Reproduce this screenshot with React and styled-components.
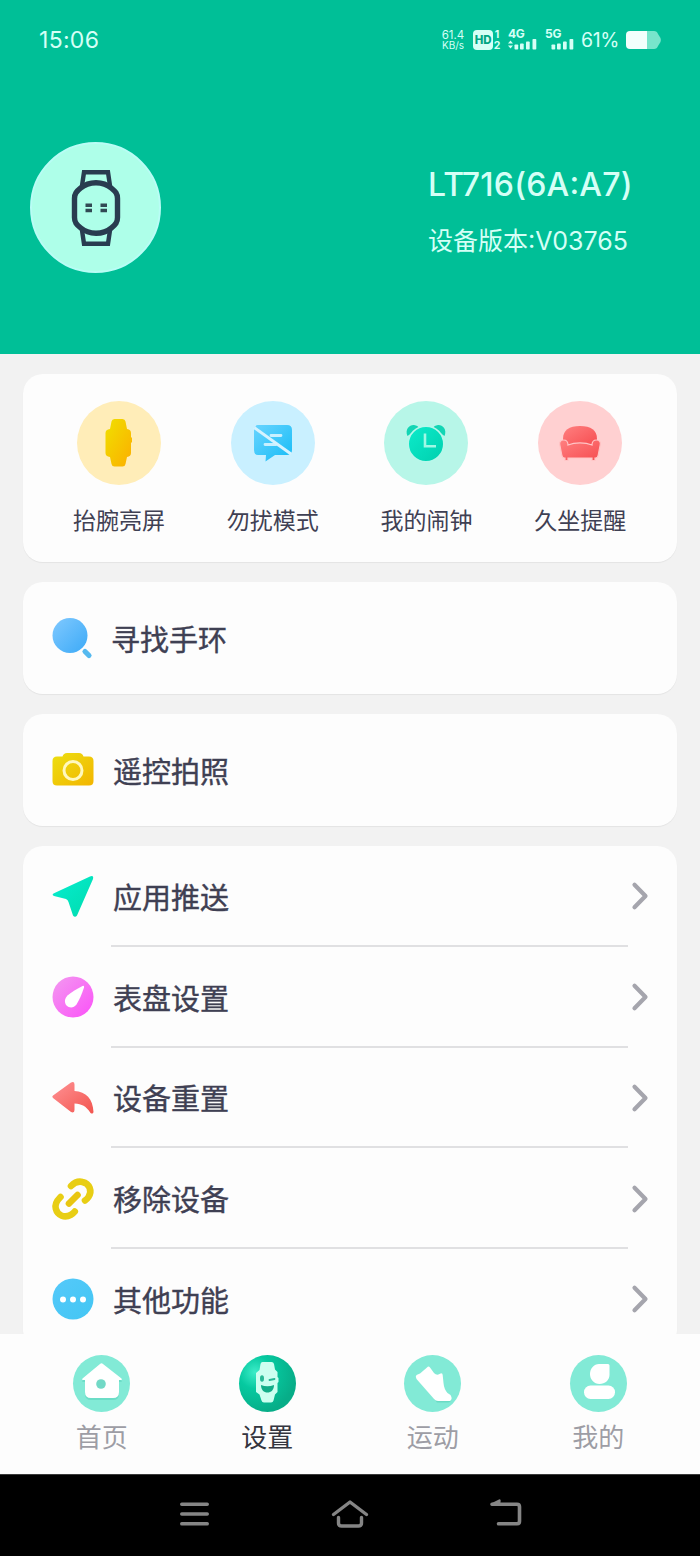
import React from 'react';
import styled, { createGlobalStyle } from 'styled-components';

const GlobalStyle = createGlobalStyle`
  * {
    box-sizing: border-box;
  }
  body {
    margin: 0;
    background: #f2f2f2;
    font-family: Inter, 'Noto Sans CJK SC', sans-serif;
    color: #3f4053;
  }
  svg {
    display: block;
    flex: none;
    overflow: visible;
  }
`;

// Layout
const Screen = styled.div`
  width: 700px;
  height: 1556px;
  display: flex;
  flex-direction: column;
  overflow: hidden;
  background: #f2f2f2;
`;

const Header = styled.header`
  flex: none;
  height: 354px;
  background: #00bf97;
  color: #d5fff6;
`;

const StatusBar = styled.div`
  height: 79px;
  padding: 0 39px 0 39px;
  display: flex;
  align-items: center;
  justify-content: space-between;
`;

const Clock = styled.span`
  font-size: 23px;
  line-height: 28px;
  letter-spacing: 0.3px;
`;

const StatusIcons = styled.div`
  display: flex;
  align-items: center;
  height: 28px;
`;

const Speed = styled.div`
  width: 24px;
  margin-right: 8px;
  font-size: 11.5px;
  line-height: 10px;
  text-align: center;
  white-space: nowrap;
  span {
    display: block;
  }
  span + span {
    font-size: 10px;
  }
`;

const HdBadge = styled.div`
  width: 20px;
  height: 20px;
  border-radius: 4px;
  background: #d5fff6;
  color: #00a583;
  font-size: 11.5px;
  font-weight: 800;
  line-height: 20px;
  text-align: center;
  letter-spacing: -0.3px;
`;

const SimNumbers = styled.div`
  width: 8px;
  margin-right: 7px;
  font-size: 10.5px;
  font-weight: 700;
  line-height: 11px;
  text-align: center;
`;

const Signal = styled.div`
  width: 30px;
  margin-right: ${ ({ gap }) => gap }px;
  font-size: 12px;
  font-weight: 700;
  line-height: 10px;
  letter-spacing: -0.3px;
`;

const Battery = styled.span`
  margin-right: 7px;
  font-size: 19.5px;
  letter-spacing: -0.4px;
`;

const Device = styled.div`
  display: flex;
  align-items: center;
  justify-content: space-between;
  height: 131px;
  margin-top: 63px;
  padding: 0 0 0 30px;
`;

const Avatar = styled.div`
  width: 131px;
  height: 131px;
  display: flex;
  align-items: center;
  justify-content: center;
  border: 2px solid #b9fdf5;
  border-radius: 50%;
  background: #aeffe9;
`;

const DeviceInfo = styled.div`
  width: 272px;
  padding-top: 7px;
  white-space: nowrap;
`;

const DeviceName = styled.h1`
  margin: 0 0 19px;
  font-size: 32px;
  font-weight: 500;
  line-height: 40px;
  letter-spacing: 0.2px;
`;

const DeviceVersion = styled.p`
  margin: 0;
  font-size: 25px;
  line-height: 34px;
`;

const Colon = styled.span`
  vertical-align: 2px;
  line-height: 1;
`;

const Content = styled.main`
  flex: 1;
  min-height: 0;
  padding: 20px 23px 0;
  display: flex;
  flex-direction: column;
  gap: 20px;
  overflow: hidden;
`;

const Card = styled.section`
  flex: none;
  border-radius: 20px;
  background: #fdfdfd;
  box-shadow: 0 1px 1px rgba(0, 0, 0, 0.06);
`;

const QuickGrid = styled(Card)`
  height: 188px;
  padding: 27px 20px 0 19px;
  display: grid;
  grid-template-columns: repeat(4, 1fr);
`;

const QuickItem = styled.div`
  display: flex;
  flex-direction: column;
  align-items: center;
  gap: 19px;
  font-size: 23px;
  line-height: 34px;
`;

const QuickCircle = styled.div`
  width: 84px;
  height: 84px;
  display: flex;
  align-items: center;
  justify-content: center;
  border-radius: 50%;
  background: ${ ({ tint }) => tint };
`;

const Row = styled.div`
  height: ${ ({ height }) => height || 100.75 }px;
  padding: 0 29px 0 29px;
  display: flex;
  align-items: center;
`;

const RowBody = styled.div`
  flex: 1;
  align-self: stretch;
  display: flex;
  align-items: center;
  margin-left: 17px;
  margin-right: 4px;
  padding-left: ${ ({ inset = 2 }) => inset }px;
  padding-top: 1px;
  border-bottom: 2px solid ${ ({ divided }) => (divided ? '#e0e0e2' : 'transparent') };
  font-size: 29px;
  -webkit-text-stroke: 0.4px currentColor;
`;

const TabBar = styled.nav`
  flex: none;
  height: 140px;
  padding: 21px 19px 0 19px;
  display: grid;
  grid-template-columns: repeat(4, 1fr);
  background: #fdfdfd;
`;

const Tab = styled.div`
  display: flex;
  flex-direction: column;
  align-items: center;
  gap: 8px;
  font-size: 26px;
  line-height: 36px;
  color: ${ ({ active }) => (active ? '#34353f' : '#9d9da5') };
`;

const SystemNav = styled.footer`
  flex: none;
  height: 82px;
  padding: 0 178px 3px 179px;
  display: flex;
  align-items: center;
  justify-content: space-between;
  border-top: 1px solid #3a3a3a;
  background: #000;
`;

// Gradient shared by the coloured icons
const Gradient = ({ id, from, to }) => (
  <defs>
    <linearGradient id={ id } x1='0' y1='0' x2='1' y2='1'>
      <stop offset='0' stopColor={ from } />
      <stop offset='1' stopColor={ to } />
    </linearGradient>
  </defs>
);

const SignalBars = ({ arrows }) => (
  <svg width='30' height='11' viewBox='0 0 30 11' fill='#d5fff6'>
    { arrows && <path d='M0 4.500 2.500 1.500 5 4.500zM0 6.500h5L2.500 9.500z' /> }
    <rect x='6.500' y='5.500' width='3.700' height='5' rx='.8' />
    <rect x='12' y='4.500' width='3.700' height='6' rx='.8' />
    <rect x='18' y='2.500' width='3.700' height='8' rx='.8' />
    <rect x='24.500' y='0' width='3.800' height='10.500' rx='.8' />
  </svg>
);

const BatteryIcon = () => (
  <svg width='35' height='18' viewBox='0 0 35 18'>
    <path d='M20 0h8q3 0 4 3l2.500 4q.8 2 0 4L32 15q-1 3-4 3h-8z' fill='#77e5cb' />
    <path d='M4 0h17v18H4q-4 0-4-4V4q0-4 4-4z' fill='#f2fffc' />
  </svg>
);

const DeviceIcon = () => (
  <svg width='48' height='76' viewBox='0 0 48 76' fill='none' stroke='#293c50'>
    <path d='M9.500 19 12 2.300h24L38.500 19M9.500 57 12 73.700h24L38.500 57' strokeWidth='4.400' />
    <path d='M24 12.800c6.500 0 11.500 2 15.500 5.400 4 3.300 6 5.300 6 10.300v19c0 5-2 7-6 10.300-4 3.400-9 5.400-15.500 5.400s-11.500-2-15.500-5.400c-4-3.300-6-5.300-6-10.300v-19c0-5 2-7 6-10.300 4-3.400 9-5.400 15.500-5.400z' fill='#aeffe9' strokeWidth='5.400' />
    <path d='M13.500 35.300h6.500M28.500 35.300h6.500M13.500 40.500h6.500M28.500 40.500h6.500' stroke='#314954' strokeWidth='3.400' />
  </svg>
);

const WristIcon = () => (
  <svg width='28' height='48' viewBox='0 0 28 48' fill='url(#wrist)'>
    <Gradient id='wrist' from='#f0e000' to='#fcae00' />
    <path d='M9.500 0h8q2.500 0 3 2.500L22 10q4 .5 4 4v4l1 1v4l-1 1v10q0 3.500-4 4l-1.500 7q-.5 2.500-3 2.500h-8Q7 47.500 6.500 45L5 38q-4.500-.5-4.500-4V14q0-3.500 4.500-4L6.500 2.500Q7 0 9.500 0z' />
  </svg>
);

const DndIcon = () => (
  <svg width='40' height='38' viewBox='0 0 40 38'>
    <Gradient id='dnd' from='#68d4ff' to='#16bcf6' />
    <path d='M5 1h29q5 0 5 5v20q0 5-5 5H22l-9.500 6.500L13 31H5q-4 0-4-5V6q0-5 4-5z' fill='url(#dnd)' />
    <path d='M18 11.500h10M12 20.500h11' stroke='#c8f0ff' strokeWidth='2.800' strokeLinecap='round' />
    <path d='M1 3.500 38 30' stroke='#d5f3ff' strokeWidth='3' />
    <path d='M0 0h4L1 5z' fill='#c9efff' />
  </svg>
);

const AlarmIcon = () => (
  <svg width='40' height='38' viewBox='0 0 40 38'>
    <Gradient id='alarm' from='#0ceccb' to='#00cfae' />
    <path d='M1.500 12C-1.500 5 4 .5 8 1q4 .5 5 3zM38.500 12C41.500 5 36 .5 32 1q-4 .5-5 3z' fill='#13d5b4' />
    <circle cx='20' cy='20' r='17.800' fill='url(#alarm)' stroke='#b8f7ea' strokeWidth='1.600' />
    <path d='M19 9.500v12.700h11' fill='none' stroke='#9ff8e5' strokeWidth='2.600' />
  </svg>
);

const SofaIcon = () => (
  <svg width='42' height='36' viewBox='0 0 42 36'>
    <Gradient id='sofa' from='#ff8080' to='#f64c50' />
    <path d='M4 14C4 5 10 1 21 1s17 4 17 13v7H4z' fill='url(#sofa)' />
    <path d='M.8 20c-.8-3 1-5 3.700-5 3 0 4.500 2 4.500 5 7-2.800 17-2.800 24 0 0-3 1.500-5 4.500-5 2.700 0 4.500 2 3.700 5L39 31q-.5 2-2.500 2h-.5v2.500h-3V33H9v2.500H6V33h-.5Q3.500 33 3 31z' fill='url(#sofa)' stroke='#ffc5c6' strokeWidth='1.200' />
  </svg>
);

const SearchIcon = () => (
  <svg width='42' height='42' viewBox='0 0 42 42'>
    <Gradient id='search' from='#80c9ff' to='#3caaf7' />
    <circle cx='18' cy='18.500' r='17.500' fill='url(#search)' />
    <path d='m33 34.500 4 4' stroke='#55b9ef' strokeWidth='5.200' strokeLinecap='round' />
  </svg>
);

const CameraIcon = () => (
  <svg width='42' height='42' viewBox='0 0 42 42'>
    <Gradient id='camera' from='#ecdf11' to='#f3b500' />
    <path d='M5 7.500h5.500Q11.500 4 15 4h12q3.500 0 4.500 3.500H37q4.500 0 4.500 4.500v20q0 4.500-4.500 4.500H5Q.5 36.500.5 32V12q0-4.500 4.500-4.500z' fill='url(#camera)' />
    <circle cx='21' cy='21.500' r='9' fill='none' stroke='#fff8bd' strokeWidth='3' />
  </svg>
);

const PushIcon = () => (
  <svg width='42' height='42' viewBox='0 0 42 42'>
    <Gradient id='push' from='#06edd0' to='#00dcae' />
    <path d='M2.500 18 38 1.500q4-1.500 3 2.500L25 40.500q-2 2.500-4 0L16.500 27Q16 25 14 24L2 21q-3-1.500.5-3z' fill='url(#push)' />
  </svg>
);

const DialIcon = () => (
  <svg width='42' height='42' viewBox='0 0 42 42'>
    <Gradient id='dial' from='#f39af0' to='#fb51f8' />
    <circle cx='21' cy='21' r='20.500' fill='url(#dial)' />
    <path d='M30.500 10q2-1 1.500 1.500C30 18 27 24.500 24.500 28.500c-3 4-7.500 3.500-10 1-2.500-3-2-7 1-10 4-3.500 9.500-6.500 15-9.500z' fill='#fff' />
  </svg>
);

const ResetIcon = () => (
  <svg width='42' height='42' viewBox='0 0 42 42'>
    <Gradient id='reset' from='#ff9294' to='#f2554f' />
    <path d='M1 18.500 19 5.500q3.500-1.500 3.500 2V14C34 14.500 41 22 41.500 35q-.5 2.500-3 1C34 29 30 27 22.500 26.500V33q0 3.500-3.500 2L1 21q-1.500-1.200 0-2.500z' fill='url(#reset)' />
  </svg>
);

const LinkIcon = () => (
  <svg width='42' height='42' viewBox='0 0 42 42' fill='none' stroke='#e8ce14' strokeWidth='6.600' strokeLinecap='round'>
    <path d='M19 8c4-4 7.500-5 11.500-4 7 1.500 10 9 6 15-1 1.500-2 2.500-3.500 3.500' />
    <path d='m17 25.500 8.500-8.500' stroke='#e9c611' />
    <path d='M8.500 19C4 23.500 2.500 26.500 3.800 30.800c1.800 7 9 9.500 15 6 1.700-1 3-2 4-3.300' />
  </svg>
);

const MoreIcon = () => (
  <svg width='42' height='42' viewBox='0 0 42 42'>
    <Gradient id='more' from='#55c9fa' to='#43c6f3' />
    <circle cx='21' cy='21' r='20.500' fill='url(#more)' />
    <path d='M11 21.500h.01M21 21.500h.01M31 21.500h.01' stroke='#fff' strokeWidth='6' strokeLinecap='round' />
  </svg>
);

const Chevron = () => (
  <svg width='16' height='28' viewBox='0 0 16 28' fill='none' stroke='#a5a5ad' strokeWidth='4.200' strokeLinecap='round' strokeLinejoin='round'>
    <path d='M2.500 2.700 13.500 14 2.500 25.300' />
  </svg>
);

const HomeTabIcon = () => (
  <svg width='57' height='57' viewBox='0 0 57 57'>
    <circle cx='28.500' cy='28.500' r='28.500' fill='#82ead6' />
    <path d='M27 10q1.500-1.500 3 0l18.500 14.500q1 1.500-1 1.500h-1.500v12q0 6-6 6H18q-6 0-6-6V26h-1.500q-2 0-1-1.500z' fill='#45c5ab' opacity='.35' transform='translate(0 1)' />
    <path d='M27 9q1.500-1.500 3 0l18.500 14.500q1 1.500-1 1.500h-1.500v12q0 6-6 6H18q-6 0-6-6V25h-1.500q-2 0-1-1.500z' fill='#fff' />
    <circle cx='28' cy='29' r='4.800' fill='#72d9c6' />
  </svg>
);

const SettingsTabIcon = () => (
  <svg width='57' height='57' viewBox='0 0 57 57'>
    <defs>
      <radialGradient id='settings' cx='.28' cy='.3' r='.72'>
        <stop offset='0' stopColor='#3cecc8' />
        <stop offset='.4' stopColor='#06c9a0' />
        <stop offset='1' stopColor='#07ad88' />
      </radialGradient>
    </defs>
    <circle cx='28.500' cy='28.500' r='28.500' fill='url(#settings)' />
    <path d='M23.500 7h9q2 0 2.500 2l1 5.500 2.500 2.500v5l1 1v4l-1 1v9L36 39.500l-1.500 6q-.5 2-2.500 2h-7q-2 0-2.500-2l-2-6L17 37V18l3.500-3 1-6q.5-2 2-2z' fill='#ccfff0' />
    <ellipse cx='23' cy='23.500' rx='2' ry='3.200' fill='#28b895' />
    <path d='m30.500 25 5-1' stroke='#28b895' strokeWidth='1.800' strokeLinecap='round' />
    <path d='M22 30q6.300 2.500 13 0c0 5-3 7.500-6.500 7.500S22 35 22 30z' fill='#12ad88' />
  </svg>
);

const SportTabIcon = () => (
  <svg width='57' height='57' viewBox='0 0 57 57'>
    <circle cx='28.500' cy='28.500' r='28.500' fill='#82ead6' />
    <path d='M12 22.500 24 12.500l8 8 6-2 1.500 16 8 10q-1 3-3.500 3H33z' fill='#45c5ab' opacity='.4' />
    <path d='M12.500 20 16 18.500l7-6q1.500-2 3 0l4 5.500q3 3 6.500.5 2-1 2.200 1.500l.8 8q.5 6 4 10l3 2q2.500 4-.5 6H34q-2.500 0-4-2L12.500 24q-1.500-2.500 0-4z' fill='#fff' />
  </svg>
);

const ProfileTabIcon = () => (
  <svg width='57' height='57' viewBox='0 0 57 57'>
    <circle cx='28.500' cy='28.500' r='28.500' fill='#82ead6' />
    <path d='M29 9h9q1.500 0 1.500 1.500V20c0 5-4.500 9-10 9s-9.500-4.500-9.500-10 4-10 9-10z' fill='#fff' />
    <rect x='14' y='30.500' width='31' height='13.500' rx='6.500' fill='#fff' />
  </svg>
);

const MenuKey = () => (
  <svg width='32' height='30' viewBox='0 0 32 30' stroke='#858585' strokeWidth='3.600' strokeLinecap='round'>
    <path d='M2.800 5.300h25.400M2.800 15h25.400M2.800 24.800h25.400' />
  </svg>
);

const HomeKey = () => (
  <svg width='40' height='30' viewBox='0 0 40 30' fill='none' stroke='#858585' strokeWidth='3.400' strokeLinecap='round' strokeLinejoin='round'>
    <path d='M2.500 15.500 19 3l16.500 12.500' />
    <path d='M7.500 18.500V24q0 3 3 3h17q3 0 3-3v-5.500' />
  </svg>
);

const BackKey = () => (
  <svg width='32' height='30' viewBox='0 0 32 30' fill='none' stroke='#858585' strokeWidth='3.600' strokeLinecap='round' strokeLinejoin='round'>
    <path d='M2 5.300h25q2.500 0 2.500 2.500v14.500q0 2.500-2.500 2.500H8.500' />
    <path d='M9.500 1.500 2 5.300h7z' fill='#858585' strokeWidth='2.400' />
  </svg>
);

const quickItems = [
  { label: '抬腕亮屏', tint: '#ffedb8', Icon: WristIcon },
  { label: '勿扰模式', tint: '#c9f0ff', Icon: DndIcon },
  { label: '我的闹钟', tint: '#b7f6e8', Icon: AlarmIcon },
  { label: '久坐提醒', tint: '#ffd0d1', Icon: SofaIcon }
];

const menuItems = [
  { label: '应用推送', Icon: PushIcon },
  { label: '表盘设置', Icon: DialIcon },
  { label: '设备重置', Icon: ResetIcon },
  { label: '移除设备', Icon: LinkIcon },
  { label: '其他功能', Icon: MoreIcon }
];

const tabs = [
  { label: '首页', Icon: HomeTabIcon },
  { label: '设置', Icon: SettingsTabIcon, active: true },
  { label: '运动', Icon: SportTabIcon },
  { label: '我的', Icon: ProfileTabIcon }
];

const App = () => {
  return (
    <Screen>
      <GlobalStyle />
      <Header>
        <StatusBar>
          <Clock>15:06</Clock>
          <StatusIcons>
            <Speed><span>61.4</span><span>KB/s</span></Speed>
            <HdBadge>HD</HdBadge>
            <SimNumbers>1<br />2</SimNumbers>
            <Signal gap={ 7 }>4G<SignalBars arrows /></Signal>
            <Signal gap={ 6 }>5G<SignalBars /></Signal>
            <Battery>61%</Battery>
            <BatteryIcon />
          </StatusIcons>
        </StatusBar>
        <Device>
          <Avatar><DeviceIcon /></Avatar>
          <DeviceInfo>
            <DeviceName>LT716(6A<Colon>:</Colon>A7)</DeviceName>
            <DeviceVersion>设备版本<Colon>:</Colon>V03765</DeviceVersion>
          </DeviceInfo>
        </Device>
      </Header>
      <Content>
        <QuickGrid>
          { quickItems.map(({ label, tint, Icon }) => (
            <QuickItem key={ label }>
              <QuickCircle tint={ tint }><Icon /></QuickCircle>
              { label }
            </QuickItem>
          )) }
        </QuickGrid>
        <Card>
          <Row height={ 112 }>
            <SearchIcon />
            <RowBody inset={ 0 }>寻找手环</RowBody>
          </Row>
        </Card>
        <Card>
          <Row height={ 112 }>
            <CameraIcon />
            <RowBody>遥控拍照</RowBody>
          </Row>
        </Card>
        <Card>
          { menuItems.map(({ label, Icon }) => (
            <Row key={ label }>
              <Icon />
              <RowBody divided={ label !== '其他功能' ? 1 : 0 }>{ label }</RowBody>
              <Chevron />
            </Row>
          )) }
        </Card>
      </Content>
      <TabBar>
        { tabs.map(({ label, Icon, active }) => (
          <Tab key={ label } active={ active ? 1 : 0 }>
            <Icon />
            { label }
          </Tab>
        )) }
      </TabBar>
      <SystemNav>
        <MenuKey />
        <HomeKey />
        <BackKey />
      </SystemNav>
    </Screen>
  );
};

export default App;
